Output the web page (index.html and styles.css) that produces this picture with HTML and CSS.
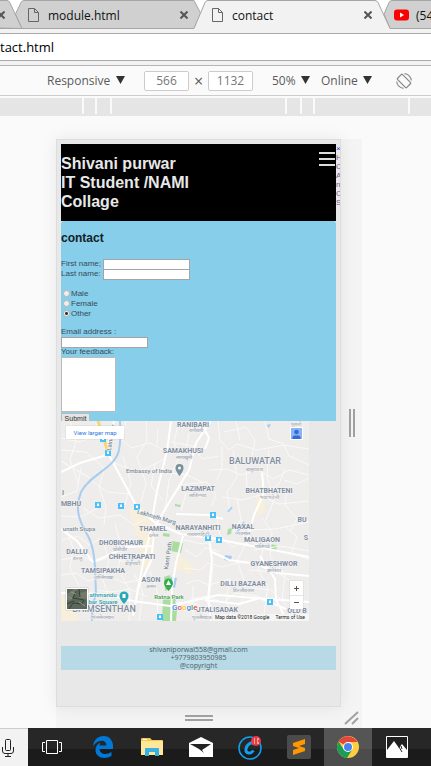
FILE: index.html
```html
<!DOCTYPE html>
<html lang="en">
<head>
<meta charset="utf-8">
<meta name="viewport" content="width=device-width, initial-scale=1">
<title>contact</title>
<link rel="stylesheet" href="styles.css">
</head>
<body>
<header class="tabs">
  <svg class="tabs-shape" width="431" height="34" viewBox="0 0 431 34" aria-hidden="true">
    <path d="M-1 28V.5H7Q9 .5 10 3L22 28.500Z" fill="#d0d0d0" stroke="#a5a5a5"/>
    <path d="M22 28.500L15.500 14 21 2.500Q22 .5 24 .5H194L201 14 194 28.500Z" fill="#d0d0d0" stroke="#a5a5a5"/>
    <path d="M435 28.500H390L384 14 389 2.500Q390 .5 392 .5H435Z" fill="#d0d0d0" stroke="#a5a5a5"/>
    <path d="M0 34V28.500H194L205 2.500Q206 .5 208 .5H375Q377 .5 378 2.500L390 28.500H431V34Z" fill="#f2f2f2"/>
    <path d="M0 28.500H194L205 2.500Q206 .5 208 .5H375Q377 .5 378 2.500L390 28.500H431" fill="none" stroke="#a5a5a5"/>
  </svg>
  <div class="tab tab-prev">
    <button class="close" aria-label="Close tab"><svg width="8" height="8" viewBox="0 0 8 8"><path d="M.5 .5 7.500 7.500M7.500 .5 .5 7.500"/></svg></button>
  </div>
  <div class="tab tab-module">
    <svg class="page-icon" width="11" height="14" viewBox="0 0 11 14"><path d="M1 .5H6.500L10.500 4.500V13.500H.5V.5ZM6.500 .5V4.500H10.500"/></svg>
    <span>module.html</span>
    <button class="close" aria-label="Close tab"><svg width="8" height="8" viewBox="0 0 8 8"><path d="M.5 .5 7.500 7.500M7.500 .5 .5 7.500"/></svg></button>
  </div>
  <div class="tab tab-contact">
    <svg class="page-icon" width="11" height="14" viewBox="0 0 11 14"><path d="M1 .5H6.500L10.500 4.500V13.500H.5V.5ZM6.500 .5V4.500H10.500"/></svg>
    <span>contact</span>
    <button class="close" aria-label="Close tab"><svg width="8" height="8" viewBox="0 0 8 8"><path d="M.5 .5 7.500 7.500M7.500 .5 .5 7.500"/></svg></button>
  </div>
  <div class="tab tab-video">
    <svg width="15" height="12" viewBox="0 0 15 12"><rect y=".5" width="15" height="11" rx="3" fill="#f00"/><path d="M6 3.500V8.500L10 6Z" fill="#fff"/></svg>
    <span>(54</span>
  </div>
</header>
<div class="address"><input type="text" aria-label="Address" value="tact.html"></div>
<div class="devbar">
  <label class="pick pick-device"><select aria-label="Device"><option>Responsive</option></select><svg width="9" height="10" viewBox="0 0 9 10"><path d="M0 0H9L4.500 8Z"/></svg></label>
  <div class="size">
    <input type="text" aria-label="Width" value="566"><span>×</span><input type="text" aria-label="Height" value="1132">
  </div>
  <label class="pick"><select aria-label="Zoom"><option>50%</option></select><svg width="9" height="10" viewBox="0 0 9 10"><path d="M0 0H9L4.500 8Z"/></svg></label>
  <label class="pick pick-net"><select aria-label="Network"><option>Online</option></select><svg width="9" height="10" viewBox="0 0 9 10"><path d="M0 0H9L4.500 8Z"/></svg></label>
  <button class="rotate" aria-label="Rotate"><svg width="16" height="16" viewBox="0 0 16 16" fill="none" stroke="#8a8a8a"><rect x="4.500" y="1.500" width="7" height="13" rx="1" transform="rotate(-45 8 8)" stroke-width="1.300"/><path d="M8.500 .7A7.300 7.300 0 0 1 15.300 7.500M7.500 15.300A7.300 7.300 0 0 1 .7 8.500" stroke-width="1.200"/></svg></button>
</div>
<div class="ruler"><i class="seg-edge"></i><i class="seg-s"></i><i class="seg-m"></i><i class="seg-main"></i><i class="seg-m"></i><i class="seg-s"></i><i class="seg-far"></i><i class="seg-rest"></i></div>

<div class="stage">
  <div class="page">
    <div class="page-main">
      <header class="banner">
        <h1>Shivani purwar<br>IT Student /NAMI<br>Collage</h1>
        <button class="menu" aria-label="Menu"><i></i><i></i><i></i></button>
      </header>
      <main>
        <form class="contact">
          <h2>contact</h2>
          <div class="row"><label for="first">First name;</label><input id="first" type="text"></div>
          <div class="row"><label for="last">Last name:</label><input id="last" type="text"></div>
          <div class="choices">
            <label class="row"><input type="radio" name="gender">Male</label>
            <label class="row"><input type="radio" name="gender">Female</label>
            <label class="row"><input type="radio" name="gender" checked>Other</label>
          </div>
          <div class="row"><label for="email">Email address :</label></div>
          <div class="row"><input id="email" type="text"></div>
          <div class="row"><label for="feedback">Your feedback:</label></div>
          <textarea id="feedback"></textarea>
          <button class="submit" type="button">Submit</button>
        </form>
        <div class="map">
          <svg class="map-art" viewBox="61 421 248 200" width="248" height="200">
            <rect x="61" y="421" width="248" height="200" fill="#eeedec"/>
            <g fill="#f7eedb"><path d="M129 510Q142 500 148 518L158 530 148 545 136 535Z"/><path d="M143 535 156 532 150 566 137 570Z"/><path d="M256 497 264 492 265 512 257 517Z"/><path d="M61 594 74 606 80 621H61ZM180 555 195 567 190 575 175 568Z"/></g>
            <g fill="#a9dda0"><path d="M172 541 183 543 181 553 171 551Z"/><path d="M163 533 170 534 169 537 163 536ZM175 504 181 505 180 507 175 506ZM228 529 232 528 231 534 227 535ZM271 544 278 546 275 551 270 549Z"/><path d="M163 598 175 596 177 610 176 621H162Z"/><path d="M164 577 170 575 173 588 165 591Z"/></g>
            <path d="M171 577 177 578 175 588 167 585ZM225 555 232 556 231 561 224 560ZM266 425 271 424 269 428Z" fill="#a6cdf5"/>
            <g fill="none" stroke="#f9f9f8" stroke-width="1">
              <path d="M61 438 80 442 94 436 98 421M70 421 76 442 70 460 78 482M61 450 86 452 105 469M61 461 92 479M81 468 77 491 61 497M61 516 81 517 98 508M83 508 99 518 120 515 134 525 145 519M91 480 107 492 131 494M104 470 99 487 106 507 104 525M113 462 137 473 164 459M126 421 122 440 131 448 150 443 165 451M146 421 147 440 137 457 146 483 141 502M123 457 131 483 125 505M158 429 157 446M155 464 151 486 163 500M179 421 174 442 180 456 169 480 165 512"/>
              <path d="M188 421 195 430 207 434M171 442 193 446 202 459 219 456M189 433 185 453M163 472 187 475 204 483M174 496 181 485 207 482 216 495 212 506M181 511 186 493M218 421 220 440 229 450 237 444 257 450 284 445 309 449M224 432 246 427 255 440 252 456M236 421 240 440M265 421 269 439 284 444 289 456 309 465M209 470 227 469 241 475 258 470 274 479 289 470 309 475M222 447 222 469 216 481M233 451 237 477 227 492 230 512M246 471 247 487 265 493 279 484 285 469M269 450 267 476 274 500 266 520M284 480 297 484 309 478M287 487 285 505 297 519 290 532M222 497 242 500 260 495 278 504 309 501M237 498 241 519 233 533"/>
              <path d="M62 540 78 536 89 545 100 539 117 544 132 539M61 560 81 556 94 562 112 557 130 564 149 558M61 575 76 573 88 581 108 576 124 583 139 580M66 529 73 548 70 568 81 591M102 539 109 560 103 580 112 606M115 524 122 549 118 568 130 591 129 621M95 590 112 592 130 589 147 597M134 573 143 593 139 621M150 571 157 590 158 621M184 540 203 544 214 541M185 550 197 557 205 548 219 551M184 568 201 570 208 563 222 567 241 562M186 584 197 580 209 585 230 579M190 599 207 596 223 603 235 593 259 596"/>
              <path d="M217 518 220 535 232 547 242 543M241 519 245 545 237 561 245 583 241 606M248 538 263 550 258 570 268 586 263 621M262 518 272 532 270 557 285 574 282 601M285 526 297 537 291 554 309 559M248 530 275 529 309 522M254 550 281 546 309 551M249 570 276 572 289 580M252 588 271 590 286 605M193 586 193 621M213 566 209 601 215 621M230 578 226 601 234 621M175 602 197 604 209 616"/>
            </g>
            <g fill="none" stroke="#fff" stroke-width="2">
              <path d="M61 472 80 463 107 455M108 453 123 481 137 507 154 522 181 534 211 538 309 557M114 421 106 453M171 421 167 451 157 491 152 520M197 421 204 428 209 438 205 449M211 421 196 443 189 470 173 496 155 526 151 561 137 590M61 529 77 541 93 562 127 547 152 546M152 525 143 563 133 616M61 593 104 594 133 601 170 606 218 595 309 602M183 536 176 563 172 587 171 621M209 538 212 560 208 599 211 621M210 551 229 560 257 564 277 573 309 576M176 514 208 515 223 519M262 473 264 493 254 515 246 545M205 600 239 604 260 598 286 609M260 556 275 579 276 600 287 621" />
            </g>
            <path d="M98 421Q104 437 108 453" fill="none" stroke="#f8d66f" stroke-width="3"/>
            <path d="M120 421Q121 439 119 450C115 469 90 474 81 492C74 509 80 523 88 536C96 551 95 572 96 594Q91 610 92 621" fill="none" stroke="#a9cdee" stroke-width="2"/>
            <path d="M133 558 130 566M236 534 244 522M228 512 232 507" stroke="#a9d2f4" stroke-width="2"/>
            <g class="transit">
              <g id="bus"><rect x="100" y="436" width="6" height="6"/><path d="M102 437.500H104V440H102Z"/></g>
              <use href="#bus" x="5" y="14"/><use href="#bus" x="-5" y="66"/><use href="#bus" x="18" y="67"/><use href="#bus" x="34" y="68"/><use href="#bus" x="110" y="76"/><use href="#bus" x="105" y="99"/><use href="#bus" x="116" y="101"/><use href="#bus" x="57" y="178"/><use href="#bus" x="167" y="163"/>
            </g>
            <g class="place">
              <text x="193" y="427">RANIBARI</text><text x="183" y="453">SAMAKHUSI</text><text x="198" y="491">LAZIMPAT</text><text x="269" y="493">BHATBHATENI</text><text x="302" y="522">BU</text><text x="71" y="506">MBHU</text><text x="63" y="495">I</text>
              <text x="153" y="531">THAMEL</text><text x="198" y="530">NARAYANHITI</text><text x="243" y="529">NAXAL</text><text x="121" y="545">DHOBICHAUR</text><text x="77" y="554">DALLU</text><text x="132" y="559">CHHETRAPATI</text><text x="103" y="573">TAMSIPAKHA</text><text x="151" y="582">ASON</text><text x="262" y="542">MALIGAON</text><text x="306" y="540">S</text><text x="274" y="566">GYANESHWOR</text><text x="243" y="586">DILLI BAZAAR</text><text x="217" y="612">UTALISADAK</text><text x="297" y="613">OLD B</text>
            </g>
            <g class="place place-big"><text x="255" y="464">BALUWATAR</text><text x="104" y="612">BHIMSENTHAN</text></g>
            <g class="native">
              <text x="196" y="432">रानीबारी</text><text x="184" y="459">सामाखुसी</text><text x="254" y="471">बालुवाटार</text><text x="198" y="497">लाजिम्पाट</text><text x="269" y="499">भाटभटेनी</text><text x="153" y="537">ठमेल</text><text x="198" y="536">नारायणहिटी</text><text x="243" y="535">नक्साल</text><text x="120" y="551">धोबीचौर</text><text x="77" y="560">डल्लु</text><text x="132" y="565">क्षेत्रपाटी</text><text x="103" y="579">ताम्सिपाखा</text><text x="151" y="588">असन</text><text x="262" y="548">मालिगाउँ</text><text x="274" y="572">ज्ञानेश्वर</text><text x="243" y="592">डिल्लीबजार</text><text x="102" y="619">भिमसेनस्थान</text><text x="202" y="619">पुतलीसडक</text><text x="296" y="426">पुरानो</text>
            </g>
            <g class="poi"><text x="149" y="473">Embassy of India</text><text x="79" y="531">unath Stupa</text><text x="0" y="0" transform="translate(156 519) rotate(16)">Lekhnath Marg</text><text x="0" y="0" transform="translate(170 556) rotate(-82)">Kanti Path</text><text x="0" y="0" transform="translate(113 438) rotate(-80)">Lainchaur</text></g>
            <g class="poi teal"><text x="103" y="597">athmandu</text><text x="103" y="604">bar Square</text></g>
            <text class="poi green" x="169" y="599">Ratna Park</text>
            <path d="M124 604Q119.500 599 119.500 596A4.500 4.500 0 0 1 128.500 596Q128.500 599 124 604Z" fill="#28a7b5"/><path d="M122.500 594H125.500V598H122.500Z" fill="#fff"/>
            <path d="M179.500 476Q175.500 471 175.500 468A4 4 0 0 1 183.500 468Q183.500 471 179.500 476Z" fill="#78909c"/><circle cx="179.500" cy="468" r="1.500" fill="#fff"/>
            <path d="M168.500 591Q164 586 164 583A4.500 4.500 0 0 1 173 583Q173 586 168.500 591Z" fill="#35ad4e"/><path d="M168.500 580 171 585H166Z" fill="#fff"/>
            <text class="google" x="172" y="610"><tspan fill="#4285f4">G</tspan><tspan fill="#ea4335">o</tspan><tspan fill="#fbbc05">o</tspan><tspan fill="#4285f4">g</tspan><tspan fill="#34a853">l</tspan><tspan fill="#ea4335">e</tspan></text>
          </svg>
          <a class="larger" href="#">View larger map</a>
          <button class="account" aria-label="Account"><svg width="11" height="11" viewBox="0 0 11 11"><rect width="11" height="11" fill="#8ab4f8"/><circle cx="5.500" cy="4" r="2.300" fill="#3569d4"/><path d="M1.500 11Q1 7.500 4 7.500H7Q10 7.500 9.500 11Z" fill="#3569d4"/></svg></button>
          <button class="satellite" aria-label="Satellite view"><svg width="20" height="20" viewBox="0 0 20 20"><rect width="20" height="20" fill="#5d665a"/><path d="M0 5 7 0H11L3 12 0 11ZM13 4 20 2V10L12 9Z" fill="#727a6b"/><path d="M9 2 6 9 17 11 15 15 6 14 2 20M12 0 13 8M0 15 7 12" fill="none" stroke="#354137"/><path d="M4 3 9 5M12 13 18 17M2 8 5 10" stroke="#939889"/></svg></button>
          <div class="zoomer"><button aria-label="Zoom in"><svg width="5" height="5" viewBox="0 0 5 5"><path d="M0 2.500H5M2.500 0V5"/></svg></button><button aria-label="Zoom out"><svg width="5" height="5" viewBox="0 0 5 5"><path d="M0 2.500H5"/></svg></button></div>
          <div class="credit"><span>Map data ©2018 Google</span><a href="#">Terms of Use</a></div>
        </div>
      </main>
      <footer>shivaniporwal558@gmail.com<br>+9779803950985<br>@copyright</footer>
    </div>
    <nav class="sidenav"><a class="shut" href="#">×</a><a href="#">H</a><a href="#">C</a><a href="#">A</a><a href="#">n</a><a href="#">C</a><a href="#">S</a></nav>
  </div>
  <div class="grip grip-right"><i></i><i></i></div>
  <div class="grip grip-bottom"><i></i><i></i></div>
  <svg class="grip-corner" width="16" height="14" viewBox="0 0 16 14" stroke="#a0a0a0" stroke-width="2"><path d="M1 13 14 1M8 13 14 7"/></svg>
</div>

<div class="taskbar">
  <button class="mic" aria-label="Voice search"><svg width="12" height="18" viewBox="0 0 12 18" fill="none" stroke="#222"><rect x="3.500" y=".5" width="5" height="11" rx="1"/><path d="M.5 8V12Q.5 14.500 3 14.500H9Q11.500 14.500 11.500 12V8M6 14.500V17M3 17.500H9"/></svg></button>
  <button class="app app-tasks" aria-label="Task view"><svg width="20" height="14" viewBox="0 0 20 14" fill="none" stroke="#fff"><path d="M4.500 .5H15.500V13.500H4.500ZM3 2.500H.5V11.500H3M17 2.500H19.500V11.500H17"/></svg></button>
  <button class="app" aria-label="Edge"><svg width="20" height="22" viewBox="0 0 20 22"><path d="M0 10C1 3.500 5 0 10.500 0C17 0 20 5 20 10V13H6.500C7 19 14 19 18.500 16V20C11 24 2.500 21.500 2.500 14C2.500 10.500 4.500 8 7.500 6.500C6.800 7.500 6.500 8.500 6.500 9.500H13.500C13.500 3 5 3 0 10Z" fill="#0078d7"/></svg></button>
  <button class="app" aria-label="File Explorer"><svg width="22" height="18" viewBox="0 0 22 18"><path d="M0 1Q0 0 1 0H9L11 2H21Q22 2 22 3V17H0Z" fill="#f6c84c"/><path d="M0 3H22V17H0Z" fill="#ffe79a"/><path d="M4 18V11Q4 10 5 10H17Q18 10 18 11V18H14V14H8V18Z" fill="#36b0e5"/><path d="M2 1.500H6" stroke="#fff"/></svg></button>
  <button class="app" aria-label="Mail"><svg width="24" height="20" viewBox="0 0 24 20"><path d="M0 6 12 0 24 6V20H0Z" fill="#fff"/><path d="M1 7 22 7 13 13 15 16 10 12Z" fill="#222"/></svg></button>
  <button class="app" aria-label="Cleaner"><svg width="24" height="25" viewBox="0 0 24 25" fill="none"><circle cx="12" cy="13" r="11" stroke="#10a0f0" stroke-width="1.500"/><path d="M16.500 9.500C14 6 9 9 8 14C7 19 13 19 15.500 15.500" stroke="#10a0f0" stroke-width="3"/><circle cx="18" cy="6" r="5" fill="#e83a45"/><path d="M16 4H17M16 8H17M19 4H21M19 6H20M19 8H21M17 6H16" stroke="#fff"/></svg></button>
  <button class="app" aria-label="Sublime Text"><svg width="24" height="24" viewBox="0 0 24 24"><rect width="24" height="24" rx="2" fill="#4b4b4b"/><path d="M6 8 18 4V9L12 11 18 13V16L6 20V15L12 13 6 11Z" fill="#ff9800"/></svg></button>
  <button class="app app-on" aria-label="Chrome"><svg width="22" height="22" viewBox="0 0 22 22"><circle cx="11" cy="11" r="11" fill="#ffcd40"/><path d="M11 11 1.500 5.500A11 11 0 0 1 20.500 6H11Z" fill="#e2463c"/><path d="M1.500 5.500A11 11 0 0 0 10 22L15.300 13.500 11 11 6.700 13.500Z" fill="#1b9d58"/><circle cx="11" cy="11" r="5" fill="#fff"/><circle cx="11" cy="11" r="4" fill="#4a83ee"/></svg></button>
  <button class="app" aria-label="Photos"><svg width="22" height="22" viewBox="0 0 22 22"><path d="M.5 .5H21.500V21.500H.5Z" fill="#202020" stroke="#fff"/><path d="M1 14 8 5 13 12 16 8 21 14V21H1Z" fill="#fff"/><path d="M13 11 16 16M15 10 16 13" stroke="#222"/></svg></button>
</div>
</body>
</html>
```
FILE: styles.css
```css
* { box-sizing: border-box; }
body { margin: 0; min-height: 100vh; display: flex; flex-direction: column; overflow-x: hidden; background: #fafafa; font-family: "Open Sans", "Noto Sans", sans-serif; font-size: 12px; color: #222; }
button, input, select, textarea { font: inherit; color: inherit; margin: 0; padding: 0; border: 0; background: none; border-radius: 0; }
button { display: flex; align-items: center; justify-content: center; }
svg { display: block; flex: none; }
i { display: block; }
a { text-decoration: none; }

/* Browser tabs */
.tabs { position: relative; height: 33px; background: #fff; display: flex; overflow: hidden; }
.tabs-shape { position: absolute; left: 0; top: 0; }
.tab { position: relative; height: 30px; display: flex; align-items: center; flex: none; white-space: nowrap; color: #111; }
.tab span { margin-left: 9px; }
.tab-prev { width: 28px; }
.tab-prev .close { margin-left: -3px; }
.tab-module { width: 184px; padding-right: 24px; }
.tab-contact { width: 182px; padding-right: 22px; }
.tab-video span { margin-left: 7px; }
.close { margin-left: auto; width: 8px; height: 8px; }
.close svg { fill: none; stroke: #555; stroke-width: 2; }
.page-icon { fill: none; stroke: #666; stroke-width: 1; }

.address { height: 33px; background: #f2f2f2; border-bottom: 1px solid #b5b5b5; }
.address input { display: block; width: 100%; height: 28px; border: solid #a9a9a9; border-width: 1px 0; background: #fff; font-size: 13px; color: #000; }

/* Device toolbar */
.devbar { height: 30px; display: flex; align-items: center; padding-left: 47px; border-bottom: 1px solid #ccc; background: #fafafa; color: #5a5a5a; }
.pick { display: flex; align-items: center; gap: 5px; flex: none; }
.pick select { appearance: none; }
.pick svg { fill: #333; }
.pick-device { width: 97px; }
.pick-net { margin-left: 11px; }
.size { display: flex; align-items: center; margin-right: 19px; }
.size input { width: 45px; height: 20px; border: 1px solid #ccc; border-radius: 2px; background: #fff; text-align: center; color: #777; }
.size span { width: 19px; text-align: center; font-size: 16px; line-height: 20px; }
.rotate { margin-left: 24px; }

.ruler { height: 20px; padding: 2px 0; display: flex; gap: 2px; background: linear-gradient(#fafafa 2px, #fafafa 18px, #e5e5e5 18px); overflow: hidden; }
.ruler i { background: #e5e5e5; flex: none; }
.seg-edge { width: 82px; }
.seg-s { width: 11px; }
.seg-m { width: 13px; }
.seg-main { width: 173px; }
.seg-far { width: 93px; }
.ruler .seg-rest { flex: 1; }

/* Emulated viewport */
.stage { flex: 1; display: grid; grid-template-columns: minmax(0, 1fr) 21px; grid-template-rows: auto 21px; padding: 23px 69px 0 56px; background: linear-gradient(#f4f4f4, #f4f4f4) content-box, #fafafa; }
.page { display: grid; grid-template-columns: minmax(0, 1fr) 4px; padding: 4px 0 36px 4px; border: 1px solid #ddd; background: #e8e8e8; box-shadow: 0 0 16px rgba(0, 0, 0, .08); font-family: "Liberation Sans", Arial, sans-serif; font-size: 8px; line-height: 10px; }
.banner { display: flex; justify-content: space-between; align-items: flex-start; padding: 10px 0; background: #000; }
h1 { margin: 0; font-size: 16px; line-height: 19px; color: #e8e8e8; }
.menu { flex-direction: column; gap: 4px; margin: -2px 1px 0 0; }
.menu i { width: 16px; height: 2px; background: #ddd; }
.contact { height: 200px; padding-top: 10px; overflow: hidden; background: #87ceeb; border-radius: 3px 3px 0 0; color: #354b55; }
h2 { margin: 0 0 14px; font-size: 12px; line-height: 14px; color: #132128; }
.row { display: flex; height: 10px; align-items: flex-start; }
.row > label { min-width: 42px; }
.row input[type="text"] { width: 87px; height: 11px; border: 1px solid #a5a5a5; background: #fff; }
.choices { margin: 10px 0 8px; }
.row input[type="radio"] { appearance: none; width: 7px; height: 7px; margin: 1px 1px 0 2px; border: 1px solid #b5b5b5; border-radius: 50%; background: #eee; }
.row input[type="radio"]:checked { background: radial-gradient(#333 1px, #eee 2px); }
textarea { display: block; width: 55px; height: 55px; border: 1px solid #bbb; background: #fff; border-radius: 1px; resize: none; }
.submit { width: 29px; height: 12px; margin-top: 1px; border: 1px solid #bbb; background: #e4e4e4; color: #333; font-size: 7px; }

/* Map */
.map { position: relative; width: 248px; max-width: 100%; overflow: hidden; }
.transit rect { fill: #48c1f8; }
.transit path { fill: #fff; }
.place, .native, .poi { text-anchor: middle; font-family: Roboto, sans-serif; stroke: #f5f5f5; stroke-width: 1; paint-order: stroke; }
.place { font-size: 7px; font-weight: 700; fill: #828ea0; }
.place-big { font-size: 9px; font-weight: 500; }
.native { font-size: 5px; fill: #9099a8; }
.poi { font-size: 6px; font-weight: 500; fill: #7b8b96; }
.teal { fill: #28a0ac; }
.green { fill: #3f9c4e; }
.google { font: 500 8px Roboto, sans-serif; stroke: #fff; stroke-width: 1; paint-order: stroke; }
.larger { position: absolute; left: 5px; top: 5px; width: 58px; height: 13px; background: #fff; box-shadow: 0 0 1px #aaa; font: 6px/13px Roboto, sans-serif; color: #2a75df; text-align: center; }
.account { position: absolute; right: 6px; top: 6px; width: 13px; height: 13px; background: #fff; }
.satellite { position: absolute; left: 5px; bottom: 11px; width: 22px; height: 22px; border: 1px solid #fff; box-shadow: 0 0 1px #888; }
.zoomer { position: absolute; right: 6px; bottom: 12px; width: 13px; background: #fff; box-shadow: 0 0 1px #aaa; }
.zoomer button { width: 13px; height: 14px; }
.zoomer button + button { border-top: 1px solid #e5e5e5; }
.zoomer svg { stroke: #555; stroke-width: 1; }
.credit { position: absolute; right: 0; bottom: 0; display: flex; gap: 6px; padding: 0 4px 0 2px; background: #f5f5f5; font: 5px/7px Roboto, sans-serif; color: #222; }
.credit a { color: inherit; }

footer { margin-top: 25px; background: #b8dae6; font: 7px/8px "Noto Sans", sans-serif; color: #55676e; text-align: center; }
.sidenav { overflow: hidden; line-height: 9px; }
.sidenav a { display: block; color: #7b549b; }
.sidenav .shut { color: #33d; }

.grip { display: flex; align-items: center; justify-content: center; gap: 2px; }
.grip i { background: #a0a0a0; }
.grip-right i { width: 2px; height: 28px; }
.grip-bottom { flex-direction: column; }
.grip-bottom i { width: 28px; height: 2px; }
.grip-corner { align-self: center; justify-self: center; }

/* Taskbar */
.taskbar { height: 38px; display: flex; gap: 1px; background: linear-gradient(#272727 21px, #1b1b1b 21px); overflow: hidden; }
.mic { flex: none; width: 28px; padding-right: 13px; border-top: 1px solid #ccc; background: #f2f2f2; }
.app { flex: none; width: 48px; }
.app-tasks { margin: 0 2px 0 -1px; }
.app-on { background: linear-gradient(#555 21px, #4c4c4c 21px); }
```
